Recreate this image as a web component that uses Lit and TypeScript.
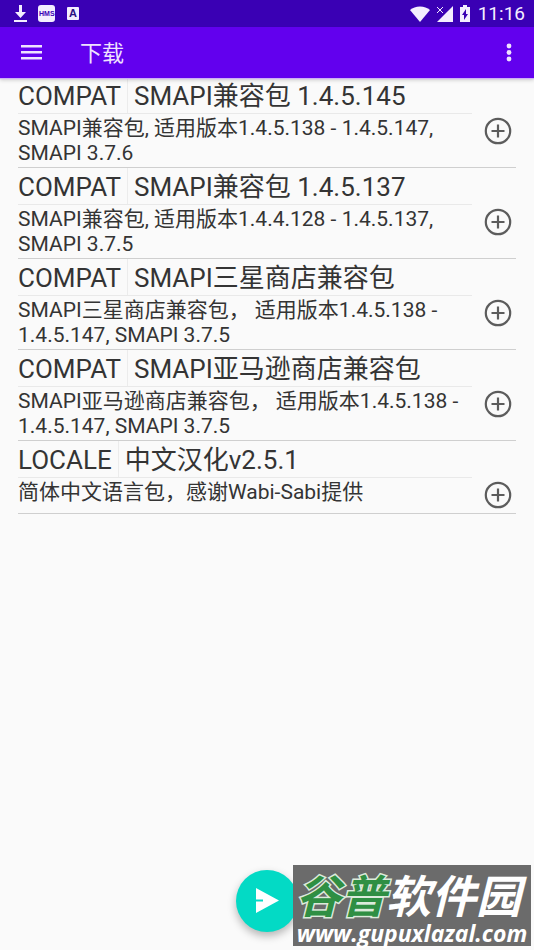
import { LitElement, html, css, svg } from "lit";
import { customElement, property } from "lit/decorators.js";

interface Pack {
  kind: string;
  title: string;
  detail: string;
}

const packs: Pack[] = [
  { kind: "COMPAT", title: "SMAPI兼容包 1.4.5.145", detail: "SMAPI兼容包, 适用版本1.4.5.138 - 1.4.5.147, SMAPI 3.7.6" },
  { kind: "COMPAT", title: "SMAPI兼容包 1.4.5.137", detail: "SMAPI兼容包, 适用版本1.4.4.128 - 1.4.5.137, SMAPI 3.7.5" },
  { kind: "COMPAT", title: "SMAPI三星商店兼容包", detail: "SMAPI三星商店兼容包， 适用版本1.4.5.138 - 1.4.5.147, SMAPI 3.7.5" },
  { kind: "COMPAT", title: "SMAPI亚马逊商店兼容包", detail: "SMAPI亚马逊商店兼容包， 适用版本1.4.5.138 - 1.4.5.147, SMAPI 3.7.5" },
  { kind: "LOCALE", title: "中文汉化v2.5.1", detail: "简体中文语言包，感谢Wabi-Sabi提供" },
];

@customElement("status-bar")
class StatusBar extends LitElement {
  static styles = css`
    :host {
      display: flex;
      align-items: center;
      justify-content: space-between;
      height: 27px;
      padding: 0 9px 0 12px;
      background: #3a00b4;
      color: #f4eeff;
    }
    .group { display: flex; align-items: center; }
    .left { gap: 9px; }
    .right { gap: 6px; }
    .time { font-size: 19px; line-height: 27px; }
    svg { display: block; fill: currentColor; }
    .hms { font: bold 7px "Liberation Sans", sans-serif; fill: #3a00b4; }
    .letter { font: bold 11px "Liberation Sans", sans-serif; fill: #2a1080; }
  `;
  render() {
    return html`
      <div class="group left">
        <svg width="17" height="20" viewBox="0 0 17 20" aria-hidden="true">
          <path d="M7 1h3v7h4l-5.500 6L3 8h4zM2 16h13v2H2z" />
        </svg>
        <svg width="18" height="18" viewBox="0 0 18 18" aria-hidden="true">
          <rect width="17" height="17" rx="3" />
          <text class="hms" x="1" y="11">HMS</text>
        </svg>
        <svg width="16" height="14" viewBox="0 0 16 14" aria-hidden="true">
          <rect x="2" width="12" height="13" rx="1" />
          <text class="letter" x="4" y="10">A</text>
        </svg>
      </div>
      <div class="group right">
        <svg width="20" height="16" viewBox="0 0 20 16" aria-hidden="true">
          <path d="M0 4Q4 .5 10 .5T20 4L10 16z" />
        </svg>
        <svg width="17" height="16" viewBox="0 0 17 16" aria-hidden="true">
          <path d="M17 0v16H1z" />
          <path d="M1 1l6 6M7 1L1 7" stroke="currentColor" />
        </svg>
        <svg width="13" height="17" viewBox="0 0 13 17" aria-hidden="true">
          <path fill-rule="evenodd" d="M4 0h4v2h3v15H1V2h3zM7 4L3 10h2v5l4-6H7z" />
        </svg>
        <span class="time">11:16</span>
      </div>
    `;
  }
}

@customElement("pack-row")
class PackRow extends LitElement {
  @property({ attribute: false }) pack!: Pack;

  static styles = css`
    :host {
      display: flex;
      align-items: flex-start;
      border-bottom: 1px solid #cfcfcf;
    }
    .text { flex: 1; min-width: 0; }
    .heading {
      display: flex;
      box-sizing: border-box;
      height: 37px;
      border-bottom: 1px solid #e9e9e9;
      font-size: 26px;
      line-height: 38px;
      white-space: nowrap;
    }
    .kind { padding-right: 6px; border-right: 1px solid #ececec; }
    .title { margin: 0; padding-left: 6px; font: inherit; }
    .detail {
      margin: 0;
      padding: 2px 0 1px;
      font-size: 21px;
      line-height: 25px;
    }
    button {
      display: block;
      width: 44px;
      margin-top: 40px;
      padding: 0 4px 4px 12px;
      border: 0;
      background: none;
      color: #5c5c5c;
    }
    svg { display: block; fill: none; stroke: currentColor; }
  `;
  render() {
    return html`
      <div class="text">
        <div class="heading">
          <span class="kind">${this.pack.kind}</span>
          <h2 class="title">${this.pack.title}</h2>
        </div>
        <p class="detail">${this.pack.detail}</p>
      </div>
      <button type="button" aria-label="添加 ${this.pack.title}">
        <svg width="28" height="28" viewBox="0 0 28 28">
          <circle cx="14" cy="14" r="12.200" stroke-width="2.200" />
          <path d="M14 7.500v13M7.500 14h13" stroke-width="2.200" />
        </svg>
      </button>
    `;
  }
}

@customElement("site-mark")
class SiteMark extends LitElement {
  static styles = css`
    :host {
      display: block;
      box-sizing: border-box;
      width: 238px;
      height: 81px;
      background: #6b6b6b;
      color: #fff;
      white-space: nowrap;
    }
    .name {
      padding-left: 3px;
      font: italic 700 45px/58px "Noto Sans CJK SC", sans-serif;
    }
    .green {
      color: #2f8f43;
      -webkit-text-stroke: 3px #dcebdc;
      paint-order: stroke fill;
    }
    .url {
      font: italic bold 23px/20px "Open Sans", sans-serif;
      text-align: center;
    }
  `;
  render() {
    return html`
      <div class="name"><span class="green">谷普</span>软件园</div>
      <div class="url">www.gupuxlazal.com</div>
    `;
  }
}

@customElement("app-root")
class AppRoot extends LitElement {
  static styles = css`
    :host {
      display: flex;
      flex-direction: column;
      position: relative;
      min-height: 100vh;
      background: #fafafa;
      color: #343434;
      font-family: Roboto, "Noto Sans CJK SC", sans-serif;
    }
    header {
      display: flex;
      align-items: center;
      height: 50px;
      padding: 0 12px 0 20px;
      background: #6200ee;
      color: #efe2ff;
      box-shadow: 0 1px 0 #6200ee, 0 2px 1px #cdb0f5, 0 3px 4px #00000033;
      z-index: 1;
    }
    h1 {
      flex: 1;
      margin: 0 0 0 38px;
      padding-top: 3px;
      font-size: 22px;
      font-weight: 400;
      line-height: 32px;
    }
    button { padding: 0; border: 0; background: none; color: inherit; }
    svg { display: block; fill: currentColor; }
    main { padding: 0 18px; }
    .play {
      position: absolute;
      bottom: 18px;
      left: calc(50% - 31px);
      display: grid;
      place-items: center;
      width: 62px;
      height: 62px;
      border-radius: 50%;
      background: #03dac5;
      color: #fff;
      box-shadow: 0 4px 8px #00000048;
    }
    site-mark { position: absolute; right: 3px; bottom: 4px; }
  `;
  render() {
    return html`
      <status-bar></status-bar>
      <header>
        <button type="button" aria-label="菜单">
          <svg width="22" height="18" viewBox="0 0 22 18">
            <path d="M1 2h21v2.400H1zM1 8h21v2.400H1zM1 14h21v2.400H1z" />
          </svg>
        </button>
        <h1>下载</h1>
        <button type="button" aria-label="更多">
          <svg width="26" height="20" viewBox="0 0 26 20">
            ${[4, 10.5, 17].map((y) => svg`<circle cx="13" cy=${y} r="2.400" />`)}
          </svg>
        </button>
      </header>
      <main>${packs.map((p) => html`<pack-row .pack=${p}></pack-row>`)}</main>
      <button class="play" type="button" aria-label="启动">
        <svg width="24" height="26" viewBox="0 0 24 26">
          <path d="M1 0L24 12.500 1 25V13.500h7v-2H1z" />
        </svg>
      </button>
      <site-mark></site-mark>
    `;
  }
}
